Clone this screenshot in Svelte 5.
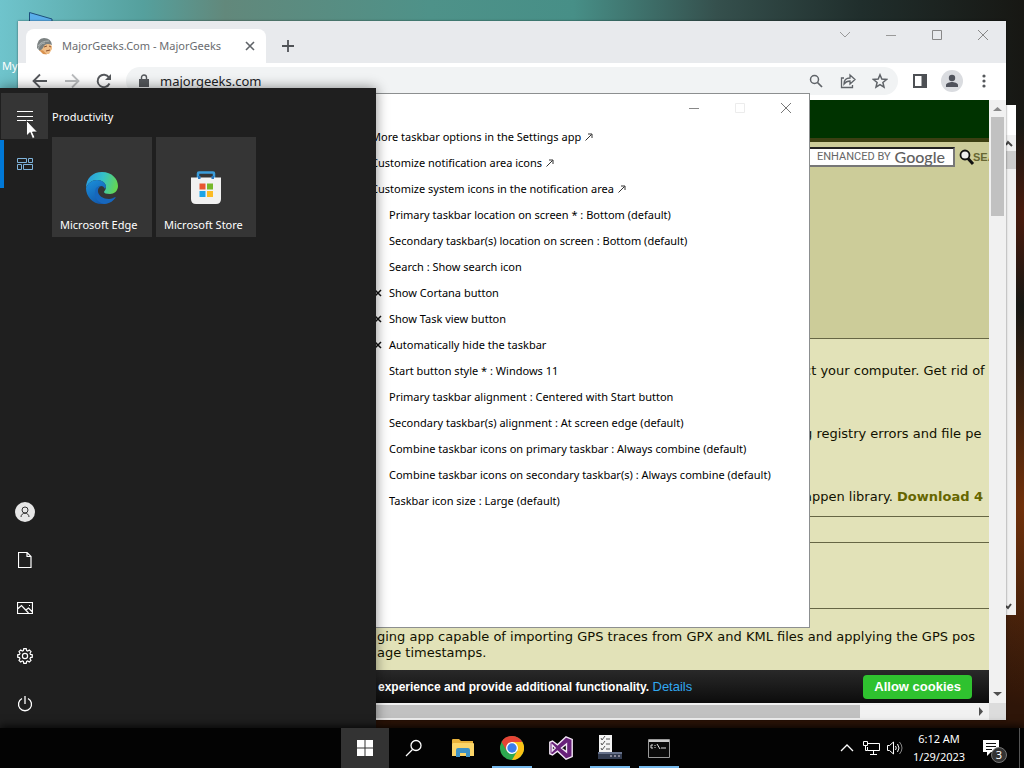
<script>
  let url = 'majorgeeks.com';
  let query = '';

  const links = [
    'More taskbar options in the Settings app',
    'Customize notification area icons',
    'Customize system icons in the notification area'
  ];

  const settings = [
    { text: 'Primary taskbar location on screen * : Bottom (default)' },
    { text: 'Secondary taskbar(s) location on screen : Bottom (default)' },
    { text: 'Search : Show search icon' },
    { text: 'Show Cortana button', off: true },
    { text: 'Show Task view button', off: true },
    { text: 'Automatically hide the taskbar', off: true },
    { text: 'Start button style * : Windows 11' },
    { text: 'Primary taskbar alignment : Centered with Start button' },
    { text: 'Secondary taskbar(s) alignment : At screen edge (default)' },
    { text: 'Combine taskbar icons on primary taskbar : Always combine (default)' },
    { text: 'Combine taskbar icons on secondary taskbar(s) : Always combine (default)' },
    { text: 'Taskbar icon size : Large (default)' }
  ];
</script>

<div class="desktop">
  <div class="shortcut">
    <svg width="24" height="12" viewBox="0 0 24 12"><path d="M.5 12V.5L23 7v5z" fill="#5aaeea" stroke="#1d4f7c" /></svg>
    <span>My</span>
  </div>

  <div class="back-window">
    <div class="back-scroll">
      <svg width="10" height="16" viewBox="0 0 10 16"><path d="M0 10l2-3 4 4" fill="none" stroke="#444" stroke-width="2" /></svg>
      <div class="back-thumb"></div>
      <svg class="back-down" width="10" height="16" viewBox="0 0 10 16"><path d="M0 7l2 2 3-4" fill="none" stroke="#444" stroke-width="2" /></svg>
    </div>
  </div>

  <section class="browser">
    <div class="tabs">
      <div class="tab">
        <svg width="18" height="18" viewBox="0 0 18 18">
          <path d="M4 8q7-5 12 1v3l-3 5H8l-4-4z" fill="#efbd87" />
          <path d="M1 11Q1 1 8 1q7 0 8 7-7-3-9 3l-3 3z" fill="#7b8181" />
          <path d="M2 9q3-5 11-5M2 12q2-6 7-6" fill="none" stroke="#b0b6b6" />
          <path d="M8 10l3-1M13 9l2 1M10 14l4-1" stroke="#8a5230" />
          <path d="M3 13l4 4 4 .5-4-4z" fill="#d9924f" />
        </svg>
        <span class="tab-title">MajorGeeks.Com - MajorGeeks</span>
        <button aria-label="Close tab"><svg width="10" height="10" viewBox="0 0 10 10"><path d="M1 1l8 8M9 1l-8 8" stroke="#5f6368" stroke-width="1.6" /></svg></button>
      </div>
      <button class="new-tab" aria-label="New tab"><svg width="14" height="14" viewBox="0 0 14 14"><path d="M7 1v12M1 7h12" stroke="#505357" stroke-width="1.8" /></svg></button>
      <div class="window-buttons">
        <button aria-label="Search tabs"><svg width="12" height="12" viewBox="0 0 12 12"><path d="M1 3l5 5 5-5" fill="none" stroke="#999" /></svg></button>
        <button aria-label="Minimize"><svg width="12" height="12" viewBox="0 0 12 12"><path d="M1 6.500h10" stroke="#999" /></svg></button>
        <button aria-label="Maximize"><svg width="12" height="12" viewBox="0 0 12 12"><path d="M1.500 1.500h9v9h-9z" fill="none" stroke="#888" /></svg></button>
        <button aria-label="Close"><svg width="12" height="12" viewBox="0 0 12 12"><path d="M1 1l10 10M11 1L1 11" stroke="#888" /></svg></button>
      </div>
    </div>

    <div class="toolbar">
      <button aria-label="Back"><svg width="16" height="16" viewBox="0 0 16 16"><path d="M15 8H2M8 1.500L1.500 8 8 14.500" fill="none" stroke="#55585c" stroke-width="1.800" /></svg></button>
      <button aria-label="Forward"><svg width="16" height="16" viewBox="0 0 16 16"><path d="M1 8h13M8 1.500L14.500 8 8 14.500" fill="none" stroke="#babcbe" stroke-width="1.800" /></svg></button>
      <button aria-label="Reload"><svg width="16" height="16" viewBox="0 0 16 16"><path d="M13.500 10.500A6.200 6.200 0 1 1 13 4.500" fill="none" stroke="#55585c" stroke-width="1.900" /><path d="M15 1v6H9z" fill="#55585c" /></svg></button>
      <div class="address">
        <svg width="10" height="14" viewBox="0 0 10 14"><path d="M0 5h10v8H0z" fill="#55585c" /><path d="M2.500 6V3.500a2.500 2.500 0 0 1 5 0V6" fill="none" stroke="#55585c" stroke-width="1.400" /></svg>
        <input type="text" aria-label="Address" bind:value={url} />
        <button aria-label="Zoom"><svg width="14" height="14" viewBox="0 0 14 14"><circle cx="5.500" cy="5.500" r="4" fill="none" stroke="#5f6368" stroke-width="1.500" /><path d="M8.500 8.500l4.500 4.500" stroke="#5f6368" stroke-width="1.700" /></svg></button>
        <button aria-label="Share"><svg width="16" height="16" viewBox="0 0 16 16"><path d="M4 5H1.500v9.500h11V12M4 11c0-4 2-6 6-6V2l5 4.500L10 11V8C7 8 5.500 9 4 11z" fill="none" stroke="#5f6368" stroke-width="1.300" /></svg></button>
        <button aria-label="Bookmark"><svg width="16" height="16" viewBox="0 0 16 16"><path d="M8 1.800l1.800 4.300 4.700.4-3.600 3 1.100 4.600L8 11.600l-4 2.500 1.100-4.600-3.600-3 4.700-.4z" fill="none" stroke="#5f6368" stroke-width="1.500" /></svg></button>
      </div>
      <button aria-label="Side panel"><svg width="14" height="14" viewBox="0 0 14 14"><path d="M1 1h12v12H1z" fill="#fff" stroke="#4d5054" stroke-width="2" /><path d="M8.500 0H14v14H8.500z" fill="#4d5054" /></svg></button>
      <button aria-label="Profile"><svg width="22" height="22" viewBox="0 0 22 22"><circle cx="11" cy="11" r="11" fill="#dadce0" /><circle cx="11" cy="8" r="3.200" fill="#50535c" /><path d="M5 17v-2c0-2 4-3 6-3s6 1 6 3v2z" fill="#50535c" /></svg></button>
      <button aria-label="Menu"><svg width="4" height="14" viewBox="0 0 4 14"><circle cx="2" cy="2" r="1.600" /><circle cx="2" cy="7" r="1.600" /><circle cx="2" cy="12" r="1.600" /></svg></button>
    </div>

    <div class="viewport">
      <div class="page">
        <div class="banner"></div>
        <div class="masthead">
          <form class="search">
            <span class="search-field">
              <input type="text" aria-label="Search the site" bind:value={query} />
              <span class="enhanced">ENHANCED BY</span><span class="google">Google</span>
            </span>
            <svg width="16" height="17" viewBox="0 0 16 17"><circle cx="6" cy="6" r="4.500" fill="#eee" stroke="#111" stroke-width="1.800" /><path d="M9 9.500l5 5.500" stroke="#111" stroke-width="3" /></svg>
            <b>SEA</b>
          </form>
        </div>
        <div class="story downloads">
          <p>ct your computer. Get rid of </p>
          <p>g registry errors and file pe</p>
          <p>appen library. <a href="#download">Download 4</a></p>
        </div>
        <div class="story divider"></div>
        <div class="story spacer"></div>
        <div class="story last">
          <p>ging app capable of importing GPS traces from GPX and KML files and applying the GPS pos</p>
          <p>age timestamps.</p>
        </div>
        <div class="cookies">
          <span>experience and provide additional functionality. <a href="#details">Details</a></span>
          <button>Allow cookies</button>
        </div>
      </div>
      <div class="vscroll">
        <svg width="17" height="17" viewBox="0 0 17 17"><path d="M4 11l4.500-4 4.500 4z" fill="#8a8a8a" /></svg>
        <div class="vthumb"></div>
        <svg width="17" height="17" viewBox="0 0 17 17"><path d="M4 6l4.500 4L13 6z" fill="#505050" /></svg>
      </div>
    </div>
    <div class="hscroll">
      <div class="hthumb"></div>
      <svg width="17" height="17" viewBox="0 0 17 17"><path d="M7 4l4 4.500L7 13z" fill="#505050" /></svg>
      <div class="corner"></div>
    </div>
  </section>

  <section class="dialog">
    <div class="window-buttons">
      <button aria-label="Minimize"><svg width="12" height="12" viewBox="0 0 12 12"><path d="M1 6.500h10" stroke="#888" /></svg></button>
      <button aria-label="Maximize" disabled><svg width="12" height="12" viewBox="0 0 12 12"><path d="M1.500 1.500h9v9h-9z" fill="none" stroke="#ececec" /></svg></button>
      <button aria-label="Close"><svg width="12" height="12" viewBox="0 0 12 12"><path d="M1 1l10 10M11 1L1 11" stroke="#777" /></svg></button>
    </div>
    {#each links as link}
      <a class="row" href="#settings">
        {link}
        <svg width="8" height="8" viewBox="0 0 8 8"><path d="M.5 7.500L6.500 1.500M3 1h4v4" fill="none" stroke="#333" /></svg>
      </a>
    {/each}
    {#each settings as item}
      <button class="row">
        <span class="mark">
          {#if item.off}
            <svg width="8" height="8" viewBox="0 0 8 8"><path d="M1 1l6 6M7 1L1 7" stroke="#111" stroke-width="1.500" /></svg>
          {/if}
        </span>
        {item.text}
      </button>
    {/each}
  </section>

  <nav class="start-menu">
    <div class="rail">
      <button class="hover" aria-label="Expand"><svg width="16" height="16" viewBox="0 0 16 16"><path d="M0 3.500h16M0 8.500h16M0 12.500h16" stroke="#fff" /></svg></button>
      <button class="pinned" aria-label="Pinned tiles"><svg width="16" height="12" viewBox="0 0 16 12"><path d="M.5.500h9v4h-9zM11.500.500h4v4h-4zM.5 6.500h4v5h-4zM6.500 6.500h9v5h-9z" fill="none" stroke="#7fb4dc" /></svg></button>
      <div class="rail-gap"></div>
      <button aria-label="Account"><svg width="20" height="20" viewBox="0 0 20 20"><circle cx="10" cy="10" r="10" fill="#e6e6e6" /><circle cx="10" cy="8" r="3" fill="none" stroke="#333" /><path d="M6 15c0-5 8-5 8 0" fill="none" stroke="#333" /></svg></button>
      <button aria-label="Documents"><svg width="14" height="16" viewBox="0 0 14 16"><path d="M.5.500H9l4 4v11H.5zM9 .5v4h4" fill="none" stroke="#fff" stroke-width="1.200" /></svg></button>
      <button aria-label="Pictures"><svg width="16" height="12" viewBox="0 0 16 12"><path d="M.5.500h15v11H.5zM.5 7l4-3.500 7 7.500M9 8l2.500-2 4 4" fill="none" stroke="#fff" stroke-width="1.200" /><path d="M12 3h1v1h-1z" fill="#fff" /></svg></button>
      <button aria-label="Settings"><svg width="16" height="16" viewBox="0 0 16 16"><path d="M6.800.7h2.400l.4 1.800 1.100.5 1.600-1 1.700 1.700-1 1.600.5 1.100 1.800.4v2.400l-1.800.4-.5 1.100 1 1.600-1.700 1.700-1.600-1-1.100.5-.4 1.800H6.800l-.4-1.800-1.100-.5-1.600 1L2 12.300l1-1.600-.5-1.100-1.800-.4V6.800l1.800-.4L3 5.300 2 3.700 3.700 2l1.600 1 1.100-.5z" fill="none" stroke="#fff" stroke-width="1.200" /><circle cx="8" cy="8" r="2.600" fill="none" stroke="#fff" stroke-width="1.200" /></svg></button>
      <button aria-label="Power"><svg width="16" height="16" viewBox="0 0 16 16"><path d="M5 2.500a6.500 6.500 0 1 0 6 0M8 0v8" fill="none" stroke="#fff" stroke-width="1.300" /></svg></button>
    </div>
    <div class="tiles">
      <h2>Productivity</h2>
      <div class="tile-grid">
        <button class="tile">
          <svg width="34" height="34" viewBox="0 0 34 34">
            <defs>
              <linearGradient id="edgeTop" x1="0" x2="1" y1="0.3" y2="0.5"><stop offset="0" stop-color="#279be0" /><stop offset=".5" stop-color="#35c1c8" /><stop offset="1" stop-color="#65d850" /></linearGradient>
              <linearGradient id="edgeLow" x1="0" x2=".7" y1="0" y2="1"><stop offset="0" stop-color="#1b91dc" /><stop offset="1" stop-color="#1151a5" /></linearGradient>
            </defs>
            <path d="M1 17C1 7 8 1 17 1c10 0 16 7 16 14 0 5-4 8-8 8-4 0-6-1-6-2 0-1 2-2 2-5 0-4-4-7-9-7C7 9 3 12 1 17z" fill="url(#edgeTop)" />
            <path d="M1 17c2-5 6-8 11-8 5 0 9 3 9 7l-1 2c-1-2-2-3-4-3-3 0-5 3-5 7 0 6 6 8 11 7 4 0 7-3 8-3 1 0-4 7-13 7C7 33 1 25 1 17z" fill="url(#edgeLow)" />
            <path d="M11 17c-3 7 0 14 8 16 6 0 10-4 12-7-2 1-4 2-7 2-6 0-10-3-11-7-.5-3 1-5 3-6-2 0-4 1-5 2z" fill="#1767bd" />
          </svg>
          <span>Microsoft Edge</span>
        </button>
        <button class="tile">
          <svg width="34" height="34" viewBox="0 0 34 34">
            <path d="M9 8V2.500q0-1 1-1h14q1 0 1 1V8" fill="none" stroke="#3b9ddb" stroke-width="2.500" />
            <path d="M2 6.500h30V28q0 5-5 5H7q-5 0-5-5z" fill="#f1f1f1" />
            <path d="M9 8V5h2.500v3zM22.500 8V5H25v3z" fill="#2877bd" />
            <path d="M10.500 12.500h6v6h-6z" fill="#e95630" /><path d="M18 12.500h6v6h-6z" fill="#76b82a" />
            <path d="M10.500 20h6v6h-6z" fill="#1da4e8" /><path d="M18 20h6v6h-6z" fill="#fbbb24" />
          </svg>
          <span>Microsoft Store</span>
        </button>
      </div>
    </div>
  </nav>

  <footer class="taskbar">
    <div class="apps">
      <button class="start" aria-label="Start"><svg width="16" height="16" viewBox="0 0 16 16"><path d="M0 0h7.500v7.500H0zM8.500 0H16v7.500H8.500zM0 8.500h7.500V16H0zM8.500 8.500H16V16H8.500z" fill="#fff" /></svg></button>
      <button aria-label="Search"><svg width="18" height="18" viewBox="0 0 18 18"><circle cx="11" cy="6.500" r="5" fill="none" stroke="#fff" stroke-width="1.300" /><path d="M7.500 10.500L1 17" stroke="#fff" stroke-width="1.300" /></svg></button>
      <button aria-label="File Explorer"><svg width="22" height="18" viewBox="0 0 22 18"><path d="M0 1q0-1 1-1h6l2 2h12v15H0z" fill="#e8b23b" /><path d="M1 4h20q1 0 1 1v12H0V5z" fill="#fbd568" /><path d="M4 18v-7q0-2 2-2h10q2 0 2 2v7h-4v-4H8v4z" fill="#3e92c5" /></svg></button>
      <button class="running" aria-label="Google Chrome"><svg width="24" height="24" viewBox="0 0 24 24"><circle cx="12" cy="12" r="12" fill="#2da94f" /><path d="M1.600 6A12 12 0 0 1 22.400 6H12L6.800 15z" fill="#e64335" /><path d="M22.400 6A12 12 0 0 1 12 24l5.200-9L12 6z" fill="#fbc116" /><circle cx="12" cy="12" r="6" fill="#fff" /><circle cx="12" cy="12" r="4.700" fill="#3b7ded" /></svg></button>
      <button aria-label="Visual Studio"><svg width="24" height="24" viewBox="0 0 24 24"><path d="M17 .8l6.200 2.600v17.200L17 23.200l-8.500-8-5 3.800-2.700-1.300V6.300L3.500 5l5 3.800z" fill="#68217a" stroke="#f3e8f6" stroke-width="1.400" /><path d="M17.500 8v8l-5-4zM3.200 9v6l3-3z" fill="#0a0a0a" stroke="#f3e8f6" stroke-width="1.400" /></svg></button>
      <button class="running" aria-label="Taskbar settings"><svg width="26" height="26" viewBox="0 0 26 26"><path d="M2 0h13v18H2z" fill="#f3f3f3" /><path d="M4 3l1 2 3-4M4 8l1 2 3-4M4 13l1 2 3-4M9 4h4M9 9h4M9 14h4" fill="none" stroke="#555" /><path d="M1 17h24v7H1z" fill="#333c50" /><path d="M1 17h24v2H1z" fill="#66718a" /><path d="M13 21h2M17 21h2M21 21h2" stroke="#889" stroke-width="2" /></svg></button>
      <button class="running" aria-label="Command Prompt"><svg width="22" height="19" viewBox="0 0 22 19"><path d="M.5.500h21v18H.5z" fill="#0a0a0a" stroke="#999" /><path d="M1 1h20v2H1z" fill="#ccc" /><path d="M5 6H3v3h2M7 6v1M7 8v1M9 5l3 5M13 9h5" fill="none" stroke="#ddd" /></svg></button>
    </div>
    <div class="tray">
      <button aria-label="Hidden icons"><svg width="14" height="8" viewBox="0 0 14 8"><path d="M1 7l6-6 6 6" fill="none" stroke="#fff" stroke-width="1.300" /></svg></button>
      <button aria-label="Network"><svg width="17" height="14" viewBox="0 0 17 14"><path d="M5 2.500h11.500v7H4.500V6M10.500 9.500v3.500M7 13.500h7M.5.500h4v4h-4zM2.500 4.500v5h2" fill="none" stroke="#fff" /></svg></button>
      <button aria-label="Volume"><svg width="16" height="14" viewBox="0 0 16 14"><path d="M.5 4.500h2l4-3.500v12l-4-3.500h-2z" fill="none" stroke="#fff" /><path d="M8.500 5q1.500 2 0 4M10.500 3q3 4 0 8" fill="none" stroke="#fff" /><path d="M12.500 1q5 6 0 12" fill="none" stroke="#888" /></svg></button>
      <div class="clock"><span>6:12 AM</span><span>1/29/2023</span></div>
      <button class="notify" aria-label="Notifications">
        <svg width="16" height="16" viewBox="0 0 16 16"><path d="M0 0h16v12H8l-4 4v-4H0z" fill="#fff" /><path d="M3 3.500h10M3 6.500h10M3 9.500h6" stroke="#111" /></svg>
        <span class="badge">3</span>
      </button>
      <button class="show-desktop" aria-label="Show desktop"></button>
    </div>
  </footer>

  <svg class="cursor" width="12" height="19" viewBox="0 0 12 19"><path d="M.5.500v15.500l3.500-3.500 2.500 6 2.500-1-2.500-5.500h5z" fill="#fff" stroke="#222" stroke-width=".8" /></svg>
</div>

<style>
  :global(body) {
    margin: 0;
  }

  .desktop {
    position: relative;
    height: 100vh;
    overflow: hidden;
    font-family: 'Noto Sans', 'Open Sans', sans-serif;
    font-size: 11px;
    line-height: 16px;
    background:
      radial-gradient(ellipse 90px 200px at 100% 66%, #71300a, transparent),
      radial-gradient(ellipse 40px 90px at 100% 28%, #4a1a0c, transparent),
      linear-gradient(transparent 60%, #2e1508 90%),
      linear-gradient(to right, #6fc4cc 0%, #55a09d 14%, #62887b 22%, #4e9289 42%, #478f87 56%, #35504d 70%, #202e2c 84%, #171713 100%);
  }

  button {
    display: flex;
    align-items: center;
    justify-content: center;
    padding: 0;
    border: none;
    background: none;
    color: inherit;
    font: inherit;
  }

  input {
    min-width: 0;
    padding: 0;
    border: none;
    outline: none;
    background: none;
    color: inherit;
    font: inherit;
  }

  svg {
    flex: none;
  }

  .shortcut {
    position: absolute;
    top: 12px;
    left: 2px;
    display: flex;
    flex-direction: column;
    gap: 34px;
    color: #fff;
  }

  .shortcut svg {
    margin-left: 27px;
  }

  .back-window {
    position: absolute;
    top: 105px;
    right: 8px;
    bottom: 153px;
    width: 400px;
    display: flex;
    justify-content: flex-end;
    background: #fff;
  }

  .back-scroll {
    display: flex;
    flex-direction: column;
    margin-top: 30px;
    background: #f0f0f0;
  }

  .back-thumb {
    height: 18px;
    background: #cdcdcd;
  }

  .back-down {
    margin-top: auto;
  }

  .browser {
    position: absolute;
    top: 21px;
    right: 18px;
    bottom: 48px;
    left: 18px;
    display: flex;
    flex-direction: column;
    background: #fff;
    box-shadow: 0 0 2px #0008;
  }

  .tabs {
    display: flex;
    height: 42px;
    padding-left: 8px;
    background: #e8eaed;
  }

  .tab {
    display: flex;
    align-items: center;
    box-sizing: border-box;
    gap: 8px;
    width: 240px;
    margin-top: 8px;
    padding: 0 11px 0 10px;
    border-radius: 8px 8px 0 0;
    background: #fff;
    color: #6a6c70;
  }

  .tab-title {
    flex: 1;
    white-space: nowrap;
  }

  .new-tab {
    width: 28px;
    margin: 8px 0 0 8px;
  }

  .window-buttons {
    display: flex;
    margin-left: auto;
  }

  .window-buttons button {
    width: 46px;
    height: 28px;
  }

  .toolbar {
    display: flex;
    align-items: center;
    height: 36px;
    padding: 0 6px;
    fill: #55585c;
  }

  .toolbar > button {
    width: 32px;
  }

  .address {
    display: flex;
    flex: 1;
    align-items: center;
    height: 28px;
    margin: 0 6px;
    padding: 0 2px 0 13px;
    border-radius: 14px;
    background: #f1f3f4;
    color: #202124;
    font-size: 13px;
  }

  .address input {
    flex: 1;
    padding-left: 11px;
  }

  .address button {
    width: 32px;
  }

  .viewport {
    display: flex;
    flex: 1;
    min-height: 0;
    margin-top: 1px;
  }

  .page {
    display: flex;
    flex: 1;
    flex-direction: column;
    min-width: 0;
    overflow: hidden;
    background: #e2e2b8;
    color: #111100;
    font-family: Verdana, 'DejaVu Sans', sans-serif;
    font-size: 13px;
    white-space: nowrap;
  }

  .banner {
    height: 38px;
    border-bottom: 4px solid #3b3f12;
    background: #003300;
  }

  .masthead {
    display: flex;
    justify-content: flex-end;
    height: 196px;
    border-bottom: 1px solid #666644;
    background: #cccc99;
  }

  .search {
    display: flex;
    align-items: center;
    width: 205px;
    height: 20px;
    margin-top: 5px;
  }

  .search svg {
    margin-left: 4px;
  }

  .search b {
    margin-left: -2px;
    color: #666633;
    font-family: 'Liberation Sans Narrow', 'Liberation Sans', sans-serif;
    font-size: 11px;
  }

  .search-field {
    display: flex;
    align-items: center;
    box-sizing: border-box;
    width: 171px;
    height: 20px;
    flex: none;
    border: 2px solid #777;
    border-top-color: #222;
    background: #fff;
    color: #666;
    font-family: Roboto, sans-serif;
    font-size: 11px;
  }

  .search-field input {
    width: 31px;
  }

  .google {
    margin-left: 4px;
    font-family: Lato, sans-serif;
    font-size: 16px;
    font-weight: 500;
    color: #606060;
  }

  .story {
    border-bottom: 1px solid #666644;
  }

  .story p {
    margin: 0;
  }

  .downloads {
    display: flex;
    flex-direction: column;
    gap: 47px;
    padding: 24px 0 11px 786px;
  }

  .downloads a {
    color: #666600;
    font-weight: bold;
    text-decoration: none;
  }

  .divider {
    height: 25px;
  }

  .spacer {
    height: 65px;
  }

  .last {
    flex: 1;
    padding: 20px 0 0 359px;
    border: none;
  }

  .cookies {
    display: flex;
    align-items: center;
    justify-content: space-between;
    height: 33px;
    padding: 0 17px 0 360px;
    background: linear-gradient(#292929, #0c0c0c);
    color: #fff;
    font-family: 'Liberation Sans', sans-serif;
    font-size: 12px;
    font-weight: bold;
  }

  .cookies a {
    color: #31a8f0;
    font-size: 13px;
    font-weight: normal;
    text-decoration: none;
  }

  .cookies button {
    height: 24px;
    padding: 0 11px;
    border-radius: 4px;
    background: #2fc22f;
    font-size: 13px;
  }

  .vscroll {
    display: flex;
    flex-direction: column;
    width: 17px;
    background: #f1f1f1;
  }

  .vthumb {
    height: 99px;
    margin: 0 2px auto;
    background: #c1c1c1;
  }

  .hscroll {
    display: flex;
    height: 17px;
    background: #f1f1f1;
  }

  .hthumb {
    width: 825px;
    margin: 2px auto 2px 17px;
    background: #c1c1c1;
  }

  .corner {
    width: 17px;
    background: #dcdcdc;
  }

  .dialog {
    position: absolute;
    top: 93px;
    right: 214px;
    bottom: 140px;
    left: 340px;
    border: 1px solid #8c8f90;
    background: #fff;
    color: #000;
  }

  .dialog .window-buttons {
    justify-content: flex-end;
    height: 30px;
  }

  .row {
    display: flex;
    align-items: center;
    justify-content: flex-start;
    gap: 4px;
    height: 26px;
    padding-left: 30px;
    color: #000;
    text-decoration: none;
    white-space: nowrap;
  }

  .mark {
    display: flex;
    width: 14px;
    justify-content: center;
  }

  .start-menu {
    position: absolute;
    top: 88px;
    bottom: 40px;
    left: 0;
    width: 376px;
    display: flex;
    background: #1f1f1f;
    color: #fff;
    box-shadow: 0 0 12px #0007;
  }

  .rail {
    display: flex;
    flex-direction: column;
    width: 50px;
    padding-top: 4px;
  }

  .rail button {
    height: 48px;
  }

  .rail .hover {
    margin: 1px 2px 1px 1px;
    height: 46px;
    background: #353535;
  }

  .rail .pinned {
    padding-right: 4px;
    border-left: 4px solid #0078d7;
  }

  .rail-gap {
    flex: 1;
  }

  .tiles {
    padding: 21px 0 0 2px;
  }

  .tiles h2 {
    margin: 0 0 12px;
    font-size: 11px;
    font-weight: normal;
  }

  .tile-grid {
    display: flex;
    gap: 4px;
  }

  .tile {
    flex-direction: column;
    justify-content: flex-end;
    gap: 12px;
    width: 100px;
    height: 100px;
    padding-bottom: 4px;
    background: #353535;
  }

  .tile span {
    align-self: flex-start;
    margin-left: 8px;
  }

  .taskbar {
    position: absolute;
    right: 0;
    bottom: 0;
    left: 0;
    display: grid;
    grid-template-columns: 1fr auto 1fr;
    height: 40px;
    background: #030303;
    color: #fff;
    box-shadow: 0 -2px 8px #000c;
  }

  .apps {
    display: flex;
    grid-column: 2;
    gap: 1px;
  }

  .apps button {
    box-sizing: border-box;
    width: 48px;
  }

  .apps .start {
    background: #333;
  }

  .apps .running {
    background: linear-gradient(#76b9ed, #76b9ed) bottom / 40px 2px no-repeat;
  }

  .tray {
    display: flex;
    justify-content: flex-end;
  }

  .tray button {
    width: 24px;
  }

  .clock {
    display: flex;
    flex-direction: column;
    align-items: center;
    justify-content: center;
    width: 64px;
    line-height: 18px;
  }

  .tray .notify {
    position: relative;
    width: 48px;
    padding-right: 8px;
  }

  .badge {
    position: absolute;
    top: 19px;
    left: 20px;
    width: 14px;
    height: 14px;
    border: 1px solid #777;
    border-radius: 50%;
    background: #333;
    line-height: 14px;
  }

  .tray .show-desktop {
    width: 5px;
    border-left: 1px solid #555;
  }

  .cursor {
    position: absolute;
    top: 120px;
    left: 26px;
  }
</style>
